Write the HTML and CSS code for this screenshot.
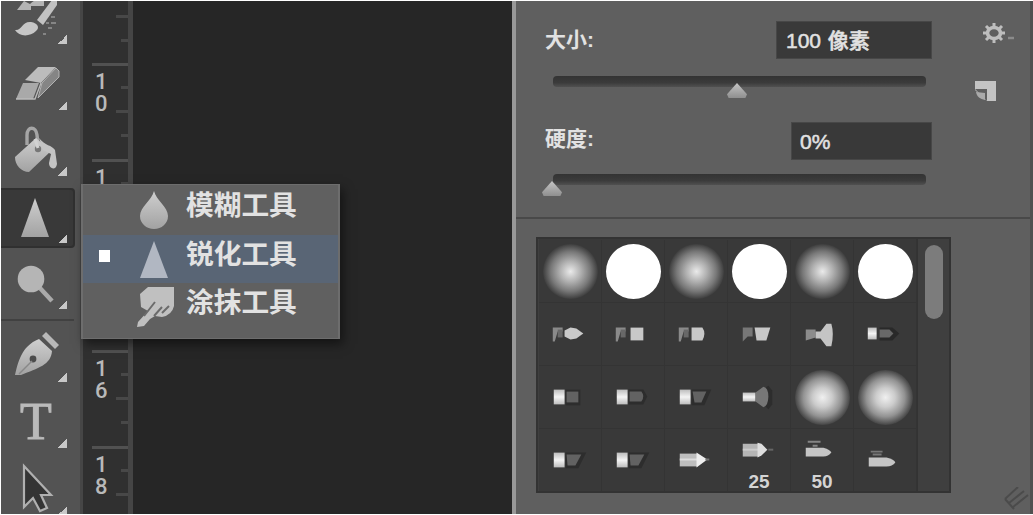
FILE: index.html
```
<!DOCTYPE html>
<html lang="zh-CN">
<head>
   <meta charset="UTF-8">
   <meta name="viewport" content="width=device-width, initial-scale=1.0">
   <title>锐化工具</title>
   <link rel="stylesheet" href="styles.css">
</head>
<body>
   <!-- shared gradients and brush tips -->
   <svg class="defs" width="0" height="0">
      <defs>
         <linearGradient id="metal" x1="0" y1="0" x2="0" y2="1">
            <stop offset="0" stop-color="#cfcfcf"/>
            <stop offset="1" stop-color="#a2a2a2"/>
         </linearGradient>
         <linearGradient id="ferrule" x1="0" y1="0" x2="0" y2="1">
            <stop offset="0" stop-color="#bdbdbd"/>
            <stop offset=".5" stop-color="#f4f4f4"/>
            <stop offset="1" stop-color="#bdbdbd"/>
         </linearGradient>
         <symbol id="handle" viewBox="0 0 63 63">
            <path d="M14 25h10v4h-5l-3 10h-2z" fill="#8a8a8a"/>
            <path d="M19 27h5v8h-5z" fill="#686868"/>
         </symbol>
         <symbol id="cap" viewBox="0 0 63 63">
            <path d="M15 24h11v15H15z" fill="url(#ferrule)"/>
         </symbol>
      </defs>
   </svg>
   <div class="app">
      <div class="tools">
         <div class="tool">
            <svg viewBox="0 0 60 60">
               <path d="M9 21l7-9 6 3c5-5 9-5 14-3v5H23v4z" fill="#b4b4b4"/>
               <path d="M29 31L44 11h5v5L35 36z" fill="#c2c2c2"/>
               <path d="M7 41c7 1 7-9 16-8 7 1 9 6 5 9-6 6-17 6-21-1z" fill="#c6c6c6"/>
               <path d="M43 28h4M43 34h5M38 34h3M40 39h4M35 45h3" stroke="#858585" stroke-width="2"/>
            </svg>
         </div>
         <div class="tool">
            <svg viewBox="0 0 60 60">
               <path d="M17 25L30 12h18L33 28z" fill="#bcbcbc"/>
               <path d="M15 28h16l-6 16H8z" fill="#a9a9a9"/>
               <path d="M34 28l14-15 3 3v6L30 43z" fill="#858585" stroke="#b2b2b2" stroke-width="1"/>
               <path d="M8 44h19l6-16" fill="none" stroke="#bababa" stroke-width="1.4"/>
            </svg>
         </div>
         <div class="tool">
            <svg viewBox="0 0 60 60">
               <path d="M19 24V14c0-9 9-9 10 0l1 9" fill="none" stroke="#a5a5a5" stroke-width="3.4"/>
               <path d="M28 17L7 36c0 8 6 15 14 15l22-21z" fill="url(#metal)"/>
               <path d="M31 17c6 8 13 7 16 12l2 14c-1 7-8 5-8-1l2-9-8-4z" fill="#c4c4c4"/>
               <circle cx="30" cy="28" r="3.2" fill="#777"/>
               <path d="M27 18l3 9" stroke="#d2d2d2" stroke-width="3"/>
            </svg>
         </div>
         <div class="tool active">
            <svg viewBox="0 0 60 60"><path d="M27 10L41 49H13z" fill="url(#metal)"/></svg>
         </div>
         <div class="tool">
            <svg viewBox="0 0 60 60">
               <path d="M31 33L44 47" stroke="#aaa" stroke-width="4.5"/>
               <circle cx="23" cy="25" r="13.3" fill="#b5b5b5"/>
            </svg>
         </div>
         <div class="separator"></div>
         <div class="tool">
            <svg viewBox="0 0 60 60">
               <path d="M34 9l4-4 13 13-4 4z" fill="#b8b8b8"/>
               <path d="M31 12l13 12c-1 14-14 17-31 24l-6 0c3-12 6-29 24-36z" fill="url(#metal)"/>
               <circle cx="25" cy="32" r="3.4" fill="#4c4c4c"/>
               <path d="M24 34L11 47" stroke="#888" stroke-width="1.5"/>
            </svg>
         </div>
         <div class="tool"><span class="type">T</span></div>
         <div class="tool">
            <svg viewBox="0 0 60 60"><path d="M16 6v41l9-9 7 13 7-3-6-13h10z" fill="#343434" stroke="#b0b0b0" stroke-width="2.2"/></svg>
         </div>
      </div>

      <div class="ruler">
         <div class="unit"></div>
         <div class="unit"><span>1<br>0</span></div>
         <div class="unit"><span>1<br>2</span></div>
         <div class="unit"><span>1<br>4</span></div>
         <div class="unit"><span>1<br>6</span></div>
         <div class="unit"><span>1<br>8</span></div>
      </div>

      <div class="canvas"></div>

      <div class="panel">
         <div class="settings">
            <div class="controls">
               <div class="field"><label>大小:</label><div class="value">100 像素</div></div>
               <div class="track"><i class="thumb mid"></i></div>
               <div class="field second"><label>硬度:</label><div class="value short">0%</div></div>
               <div class="track"><i class="thumb"></i></div>
            </div>
            <div class="actions">
               <svg width="36" height="24" viewBox="0 0 36 24">
                  <ellipse cx="13" cy="12" rx="6.5" ry="5.5" fill="none" stroke="#bebebe" stroke-width="3.6"/>
                  <path d="M13 2v4M13 18v4M2 12h4M20 12h4M5 5l3 3M21 5l-3 3M5 19l3-3M21 19l-3-3" stroke="#bebebe" stroke-width="3"/>
                  <path d="M27 17h6" stroke="#8b8b8b" stroke-width="2.5"/>
               </svg>
               <svg class="new" width="24" height="22" viewBox="0 0 24 22">
                  <path d="M1 1h21v20H13L1 10z" fill="#c3c3c3"/>
                  <path d="M1 9h12v12z" fill="#5f5f5f"/>
                  <path d="M2 12l9 1v7c-5-1-8-3-9-8z" fill="#aaa"/>
               </svg>
            </div>
         </div>

         <div class="presets">
            <div class="brushes">
               <div class="cell"><i class="soft dim"></i></div>
               <div class="cell"><i class="hard"></i></div>
               <div class="cell"><i class="soft dim"></i></div>
               <div class="cell"><i class="hard"></i></div>
               <div class="cell"><i class="soft dim"></i></div>
               <div class="cell"><i class="hard"></i></div>

               <div class="cell"><svg viewBox="0 0 63 63"><use href="#handle"/><path d="M26 28l6-3 6 1 7 5-7 5-6 1-6-3z" fill="#cacaca"/></svg></div>
               <div class="cell"><svg viewBox="0 0 63 63"><use href="#handle"/><path d="M29 25h13v13H29z" fill="#c8c8c8"/></svg></div>
               <div class="cell"><svg viewBox="0 0 63 63"><use href="#handle"/><path d="M27 25h11q4 6 0 13H27z" fill="#c8c8c8"/></svg></div>
               <div class="cell"><svg viewBox="0 0 63 63"><path d="M15 25h10v9h-5l-5 5z" fill="#777"/><path d="M27 25h16l-4 13H29z" fill="#c8c8c8"/></svg></div>
               <div class="cell"><svg viewBox="0 0 63 63"><path d="M15 27h10v8l-10 3z" fill="#8c8c8c"/><path d="M25 29h5l6-8h5q3 10 0 23h-5l-6-8h-5z" fill="#c4c4c4"/></svg></div>
               <div class="cell"><svg viewBox="0 0 63 63"><path d="M26 25h13l7 6-7 7H26z" fill="#292929"/><path d="M14 25h9v12h-9z" fill="url(#ferrule)"/><path d="M26 27h10l4 4-4 4H26z" fill="#686868"/></svg></div>

               <div class="cell"><svg viewBox="0 0 63 63"><path d="M27 24h15v16H27z" fill="#2d2d2d"/><path d="M28 26h12v11H28z" fill="#626262"/><use href="#cap"/></svg></div>
               <div class="cell"><svg viewBox="0 0 63 63"><path d="M27 24h15l4 7-4 8H27z" fill="#2d2d2d"/><path d="M28 26h12q4 5 0 10H28z" fill="#626262"/><use href="#cap"/></svg></div>
               <div class="cell"><svg viewBox="0 0 63 63"><path d="M27 24h20l-7 16H27z" fill="#2d2d2d"/><path d="M28 26h14l-5 11h-7z" fill="#626262"/><use href="#cap"/></svg></div>
               <div class="cell"><svg viewBox="0 0 63 63"><path d="M34 25l7-5 4 5v14l-4 5-7-7z" fill="#2d2d2d"/><path d="M15 27h13v9H15z" fill="url(#ferrule)"/><path d="M28 27l8-6q5 1 5 10t-5 11l-8-6z" fill="#777"/></svg></div>
               <div class="cell"><i class="soft"></i></div>
               <div class="cell"><i class="soft"></i></div>

               <div class="cell"><svg viewBox="0 0 63 63"><path d="M27 24h21l-8 16H27z" fill="#2d2d2d"/><path d="M28 26h15l-6 11h-8z" fill="#626262"/><use href="#cap"/></svg></div>
               <div class="cell"><svg viewBox="0 0 63 63"><path d="M27 24h21l-8 16H27z" fill="#2d2d2d"/><path d="M28 26h15l-6 11h-8z" fill="#626262"/><use href="#cap"/></svg></div>
               <div class="cell"><svg viewBox="0 0 63 63"><path d="M15 25h18v13H15z" fill="#bdbdbd"/><path d="M15 31h18" stroke="#ddd" stroke-width="2"/><path d="M32 24l11 7-11 8z" fill="#eee"/><path d="M41 31h4" stroke="#777" stroke-width="2"/></svg></div>
               <div class="cell"><svg viewBox="0 0 63 63"><path d="M15 15h16v13H15z" fill="#b5b5b5"/><path d="M15 21h16" stroke="#ccc" stroke-width="2"/><path d="M30 14l4 1 6 6-6 6-4 2z" fill="#dedede"/><path d="M41 21h5" stroke="#666" stroke-width="2"/></svg><b>25</b></div>
               <div class="cell"><svg viewBox="0 0 63 63"><path d="M17 13h13M22 17h5" stroke="#858585" stroke-width="2"/><path d="M15 19h18q7 2 8 5-3 4-8 4H15z" fill="#c5c5c5"/></svg><b>50</b></div>
               <div class="cell"><svg viewBox="0 0 63 63"><path d="M17 23h12M19 26h9" stroke="#777" stroke-width="2"/><path d="M15 29h18q8 2 9 5-3 4-9 4H15z" fill="#c5c5c5"/></svg></div>
            </div>
            <div class="scrollbar"><div class="scroll-thumb"></div></div>
         </div>
         <svg class="grip" viewBox="0 0 26 24"><path d="M2 12L15 0M6 16L21 4M10 20L25 8M2 12l9 10" stroke="#4b4b4b" stroke-width="2"/></svg>
      </div>
   </div>

   <div class="menu">
      <div class="menu-item">
         <i class="check"></i>
         <svg viewBox="0 0 40 44"><path d="M20 3c2 9 14 16 14 25a14 13 0 0 1-28 0C6 19 18 12 20 3z" fill="url(#metal)"/></svg>
         <span>模糊工具</span>
      </div>
      <div class="menu-item selected">
         <i class="check"></i>
         <svg viewBox="0 0 40 44"><path d="M20 4L34 41H6z" fill="#b1b7c2"/></svg>
         <span>锐化工具</span>
      </div>
      <div class="menu-item">
         <i class="check"></i>
         <svg viewBox="0 0 40 44">
            <path d="M6 9l8-7h26v19q-2 9-12 11l-7-1-5 3-6 7-7 1 1-5 10-11-7-4z" fill="#c0c0c0"/>
            <path d="M21 17L10 31M28 22l-8 9M35 21l-7 7" stroke="#6b6b6b" stroke-width="2"/>
         </svg>
         <span>涂抹工具</span>
      </div>
   </div>
</body>
</html>
```
FILE: styles.css
```
*{
   margin: 0;
   padding: 0;
   box-sizing: border-box;
}
body{
   background: #fff;
   padding: 1px 0 0 1px;
   height: 515px;
   overflow: hidden;
   font-family: "Liberation Sans", "Noto Sans CJK SC", sans-serif;
   color: #e2e2e2;
}
svg{
   display: block;
}
.defs{
   position: absolute;
}
.app{
   display: flex;
   height: 513px;
   overflow: hidden;
   background: #262626;
}
/* toolbar */
.tools{
   width: 82px;
   flex: none;
   background: #535353;
   border-right: 3px solid #464646;
}
.tools .tool:first-child{
   margin-top: -15.5px;
}
.tool{
   height: 66.4px;
   padding: 3.2px 0 3.2px 7px;
   display: flex;
   align-items: center;
   background: linear-gradient(135deg, transparent 50%, #c8c8c8 50%) 57px 49px / 9px 9px no-repeat;
}
.tool svg{
   width: 60px;
   height: 60px;
   overflow: visible;
}
.tool.active{
   background: linear-gradient(135deg, transparent 50%, #c8c8c8 50%) 57px 44px / 9px 9px no-repeat, #393939;
   height: 60px;
   width: 74px;
   margin: 3.2px 0;
   padding: 0 0 0 7px;
   border: 2px solid #303030;
   border-left: 0;
   border-radius: 0 4px 4px 0;
}
.separator{
   height: 2px;
   margin: 2px 6px 2.5px 0;
   background: #414141;
}
.type{
   width: 56px;
   text-align: center;
   font: 52px/56px "Liberation Serif", serif;
   color: #bababa;
   -webkit-text-stroke: 1px #bababa;
   padding-bottom: 4px;
}
/* ruler */
.ruler{
   width: 50px;
   flex: none;
   background: #303030;
   border-right: 5px solid #454545;
}
.ruler .unit:first-child{
   margin-top: -33.5px;
}
.unit{
   height: 95.7px;
   padding: 8px 0 0 12px;
   font: 500 22px/22px Roboto, sans-serif;
   color: #b9b9b9;
   background:
      linear-gradient(#515151, #515151) 9px 0 / 40px 3px no-repeat,
      linear-gradient(#484848, #484848) right 23px / 7px 3px no-repeat,
      linear-gradient(#484848, #484848) right 47px / 12px 3px no-repeat,
      linear-gradient(#484848, #484848) right 71px / 7px 3px no-repeat;
}
.unit span{
   display: block;
}
.canvas{
   flex: 1;
   background: #262626;
}
/* brush panel */
.panel{
   width: 521px;
   flex: none;
   background: #5f5f5f;
   border-left: 4px solid #989898;
   border-right: 3px solid #505050;
}
.settings{
   display: flex;
   height: 218px;
   padding: 20px 0 0 29px;
   border-bottom: 2px solid #494949;
}
.controls{
   width: 387px;
}
.field{
   display: flex;
   justify-content: space-between;
   height: 38px;
   font-size: 21px;
   font-weight: bold;
   line-height: 38px;
}
.field.second{
   margin-top: 35px;
}
.second label{
   line-height: 34px;
}
.value{
   width: 156px;
   padding-left: 9px;
   background: #393939;
   border: 1px solid #474747;
   line-height: 38px;
   font-weight: 500;
   -webkit-text-stroke: .5px #e2e2e2;
   word-spacing: 1px;
}
.value.short{
   width: 141px;
   padding-left: 8px;
}
.track{
   position: relative;
   width: 373px;
   height: 11px;
   margin: 17px 0 0 8px;
   border-radius: 4px;
   background: linear-gradient(#333, #3b3b3b 60%, #505050);
}
.second + .track{
   margin-top: 14px;
}
.thumb{
   position: absolute;
   left: -11px;
   top: 7px;
   width: 20px;
   height: 15px;
   background: linear-gradient(#c5c5c5, #8f8f8f);
   clip-path: polygon(50% 0, 100% 75%, 92% 100%, 8% 100%, 0 75%);
}
.thumb.mid{
   left: 174px;
}
.actions{
   padding-left: 49px;
}
.actions .new{
   margin: 35px 0 0 -7px;
}
.presets{
   display: flex;
   width: 415px;
   height: 256px;
   margin: 18px 0 0 20px;
   padding-left: 1px;
   background: #3f3f3f;
   border: 2px solid #333;
   overflow: hidden;
}
.brushes{
   width: 379px;
   flex: none;
   display: grid;
   grid-template-columns: repeat(6, 63px);
   grid-auto-rows: 63px;
   padding-top: 1px;
   background: #393939;
   border-right: 2px solid #333;
}
.cell{
   display: grid;
   place-items: center;
   border-right: 1px solid #343434;
   border-bottom: 1px solid #343434;
}
.cell > *{
   grid-area: 1 / 1;
}
.cell svg{
   width: 62px;
   height: 62px;
}
.cell b{
   align-self: end;
   font-size: 19px;
   line-height: 19px;
   color: #d4d4d4;
}
.hard,
.soft{
   width: 55px;
   height: 55px;
   border-radius: 50%;
   background: #fff;
}
.soft{
   background: radial-gradient(circle closest-side, #f0f0f0, #ccc 35%, #929292 70%, #454545);
}
.soft.dim{
   background: radial-gradient(circle closest-side, #eaeaea, #b0b0b0 38%, #787878 72%, #3e3e3e);
}
.scrollbar{
   padding: 6px 0 0 7px;
}
.scroll-thumb{
   width: 18px;
   height: 74px;
   border-radius: 9px;
   background: #7c7c7c;
}
.grip{
   width: 26px;
   height: 24px;
   margin: -6px 1px 0 auto;
}
/* tool flyout */
.menu{
   position: absolute;
   left: 81px;
   top: 184px;
   width: 259px;
   height: 155px;
   padding-top: 1px;
   background: #606060;
   border: 1px solid #6d6d6d;
   border-width: 1px 2px;
   box-shadow: 3px 5px 10px rgba(0, 0, 0, .5);
}
.menu-item{
   display: flex;
   align-items: center;
   height: 48.6px;
   padding-left: 16px;
}
.menu-item.selected{
   background: #596575;
}
.check{
   width: 11px;
   height: 12px;
   margin: -6px 24px 0 0;
}
.selected .check{
   background: #fff;
}
.menu-item svg{
   width: 40px;
   height: 44px;
   margin-right: 12px;
}
.menu-item span{
   font-size: 27.7px;
   font-weight: bold;
   line-height: 40px;
   padding-bottom: 8px;
}
```
